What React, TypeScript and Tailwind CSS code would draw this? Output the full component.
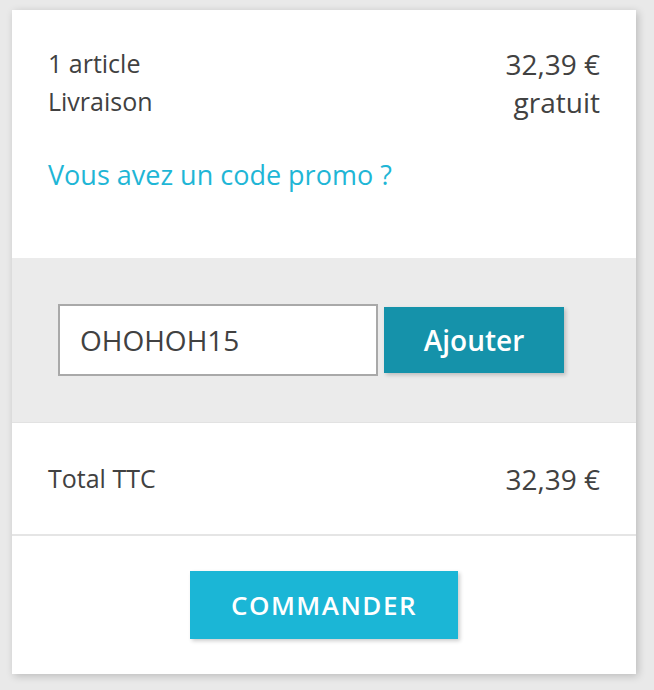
import { useState } from "react"

export default function App() {
  const [code, setCode] = useState("OHOHOH15")

  return (
    <div className="min-h-screen bg-[#e9e9e9] pt-[10px] pl-[12px] font-['Open_Sans',sans-serif] text-[#414141]">
      <div className="w-[624px] h-[664px] bg-white shadow-[2px_2px_8px_0_rgba(0,0,0,0.2)] flex flex-col">
        {/* Summary lines */}
        <div className="h-[248px] px-[36px] pt-[35px]">
          <div className="flex items-center justify-between h-[38px]">
            <span className="text-[25px]">1 article</span>
            <span className="text-[28px]">32,39 €</span>
          </div>
          <div className="flex items-center justify-between h-[38px]">
            <span className="text-[25px]">Livraison</span>
            <span className="text-[28px]">gratuit</span>
          </div>
          <a href="#" className="block mt-[35px] h-[38px] leading-[38px] text-[27px] text-[#1fb6d6]">
            Vous avez un code promo ?
          </a>
        </div>

        {/* Promo code */}
        <div className="h-[165px] bg-[#ebebeb] border-b border-[#e2e2e2] flex items-center pl-[46px]">
          <input
            type="text"
            value={code}
            onChange={(e) => setCode(e.target.value)}
            className="w-[320px] h-[72px] border-2 border-[#a9a9a9] bg-white px-[20px] text-[28px] text-[#414141] outline-none"
          />
          <button className="ml-[6px] w-[180px] h-[66px] bg-[#1592aa] text-white text-[28px] font-semibold shadow-[2px_2px_4px_0_rgba(0,0,0,0.2)]">
            Ajouter
          </button>
        </div>

        {/* Total */}
        <div className="h-[113px] px-[36px] flex items-center justify-between border-b-2 border-[#e5e5e5]">
          <span className="text-[25px]">Total TTC</span>
          <span className="text-[28px]">32,39 €</span>
        </div>

        {/* Checkout */}
        <div className="flex-1 flex items-center justify-center">
          <button className="w-[268px] h-[68px] bg-[#1bb6d6] text-white text-[26px] font-semibold uppercase tracking-[1.5px] shadow-[2px_2px_4px_0_rgba(0,0,0,0.2)]">
            Commander
          </button>
        </div>
      </div>
    </div>
  )
}
